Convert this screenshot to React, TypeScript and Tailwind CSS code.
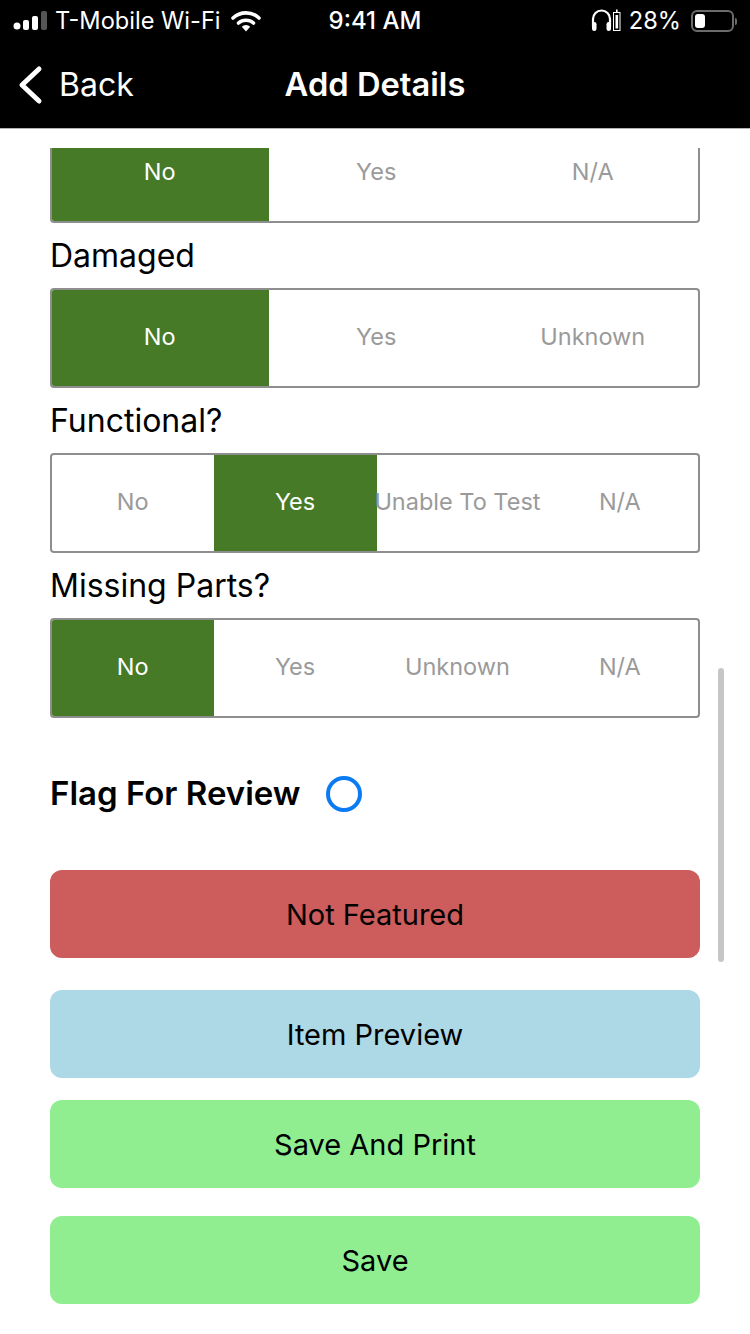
const SEGMENTS = [
  { label: "", options: ["No", "Yes", "N/A"], active: 0, clipped: true },
  { label: "Damaged", options: ["No", "Yes", "Unknown"], active: 0 },
  { label: "Functional?", options: ["No", "Yes", "Unable To Test", "N/A"], active: 1 },
  { label: "Missing Parts?", options: ["No", "Yes", "Unknown", "N/A"], active: 0 },
];

const BUTTONS = [
  { label: "Not Featured", className: "bg-[#cd5c5c] mt-[0px]" },
  { label: "Item Preview", className: "bg-[#add8e6] mt-[32px]" },
  { label: "Save And Print", className: "bg-[#90ee90] mt-[22px]" },
  { label: "Save", className: "bg-[#90ee90] mt-[28px]" },
];

function StatusBar() {
  return (
    <div className="h-[42px] flex items-center text-white text-[23.6px] relative">
      <svg width="34" height="20" viewBox="0 0 34 20" className="ml-[13px]">
        <circle cx="4" cy="15" r="3.5" fill="#fff" />
        <rect x="10" y="9" width="6" height="10" rx="2" fill="#fff" />
        <rect x="19" y="5" width="6" height="14" rx="2" fill="#fff" />
        <rect x="28" y="0" width="6" height="19" rx="2" fill="#555" />
      </svg>
      <span className="ml-[8px]">T-Mobile Wi-Fi</span>
      <svg width="30" height="22" viewBox="0 0 30 22" className="ml-[10px]">
        <path d="M2 8 A19 19 0 0 1 28 8" fill="none" stroke="#fff" strokeWidth="3.6" strokeLinecap="round" />
        <path d="M7.5 13 A11.5 11.5 0 0 1 22.5 13" fill="none" stroke="#fff" strokeWidth="3.6" strokeLinecap="round" />
        <path d="M10.8 16.8 A6 6 0 0 1 19.2 16.8 L15 21.5 Z" fill="#fff" />
      </svg>
      <span className="absolute left-0 right-0 text-center font-medium text-[24px]">9:41 AM</span>
      <svg width="30" height="24" viewBox="0 0 30 24" className="ml-auto">
        <path d="M2 18 V10 A8.5 8.5 0 0 1 19 10 V18" fill="none" stroke="#fff" strokeWidth="2.2" />
        <rect x="1" y="13" width="4.5" height="9" rx="2.2" fill="#fff" />
        <rect x="15.5" y="13" width="4.5" height="9" rx="2.2" fill="#fff" />
        <rect x="22.5" y="3.5" width="6.5" height="18" fill="none" stroke="#fff" strokeWidth="1" />
        <rect x="24.5" y="6" width="2.6" height="13.5" fill="#fff" />
        <rect x="25" y="0.5" width="1.6" height="2.5" fill="#fff" />
      </svg>
      <span className="ml-[8px]">28%</span>
      <div className="ml-[10px] mr-[13px] flex items-center">
        <div className="w-[43px] h-[22px] rounded-[6px] border-2 border-[#6b6b6b] p-[2px]">
          <div className="w-[10px] h-full rounded-[3px] bg-white" />
        </div>
        <div className="w-[2px] h-[7px] bg-[#6b6b6b] rounded-r-full ml-[1px]" />
      </div>
    </div>
  );
}

function Segment({ options, active, clipped }: { options: string[]; active: number; clipped?: boolean }) {
  return (
    <div className={`h-[100px] border-2 border-[#8e8e8e] rounded-[4px] overflow-hidden ${clipped ? "-mt-[25px]" : ""}`}>
      {/* the row is a little wider than the box, the right border clips it */}
      <div className="w-[649.5px] h-full flex">
        {options.map((opt, i) => (
          <div
            key={opt}
            className={`flex-1 min-w-0 flex justify-center pt-[29px] pr-[1px] text-[23.5px] leading-[36px] whitespace-nowrap ${
              i === active ? "bg-[#467a27] text-white" : "text-[#9a9a9a]"
            }`}
          >
            {opt}
          </div>
        ))}
      </div>
    </div>
  );
}

export default function App() {
  return (
    <div className="w-[750px] h-[1334px] bg-white relative overflow-hidden font-['Inter','Liberation_Sans',sans-serif] text-black">
      <header className="h-[129px] bg-black border-b border-[#b5b5b5]">
        <StatusBar />
        <div className="h-[86px] flex items-center relative text-white text-[32px]">
          <svg width="26" height="40" viewBox="0 0 26 40" className="ml-[17px]">
            <path d="M22 4 L5 20 L22 36" fill="none" stroke="#fff" strokeWidth="5" strokeLinecap="round" strokeLinejoin="round" />
          </svg>
          <span className="ml-[16px]">Back</span>
          <span className="absolute left-0 right-0 text-center font-semibold text-[32.7px]">Add Details</span>
        </div>
      </header>

      <main className="mt-[19px] h-[1186px] overflow-hidden px-[50px]">
        {SEGMENTS.map((s) => (
          <div key={s.options.join() + s.label}>
            {s.label && <div className="h-[65px] pt-[11px] text-[32px] leading-[44px]">{s.label}</div>}
            <Segment options={s.options} active={s.active} clipped={s.clipped} />
          </div>
        ))}

        <div className="mt-[52px] h-[48px] flex items-center">
          <span className="text-[33px] font-semibold pb-[1px]">Flag For Review</span>
          <span className="ml-[25px] w-[36px] h-[36px] rounded-full border-4 border-[#0a7bf2]" />
        </div>

        <div className="mt-[52px]">
          {BUTTONS.map((b) => (
            <div key={b.label} className={`h-[88px] rounded-[12px] flex items-center justify-center pt-[2px] text-[29px] ${b.className}`}>
              {b.label}
            </div>
          ))}
        </div>
      </main>

      {/* overlay scrollbar */}
      <div className="absolute left-[718px] top-[668px] w-[6px] h-[294px] rounded-full bg-[#c6c6c6]" />
    </div>
  );
}
